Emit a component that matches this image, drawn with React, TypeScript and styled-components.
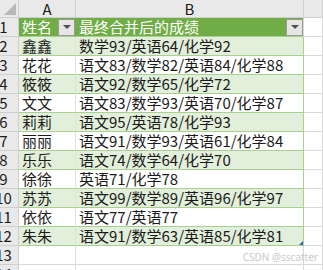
import React from 'react';
import styled, { createGlobalStyle } from 'styled-components';

const GlobalStyle = createGlobalStyle`
  html, body {
    margin: 0;
    padding: 0;
    background: #ffffff;
    overflow: hidden;
  }
  body {
    font-family: "Noto Sans CJK SC", "Noto Sans", sans-serif;
  }
`;

const colors = {
  headerBg: '#e9e9e9',
  headerLine: '#cfcfcf',
  grid: '#d9d9d9',
  tableHead: '#70ad47',
  band: '#e2efda',
  tableLine: '#a9d08e',
  text: '#1a1a1a',
};

// the sheet is scrolled a little to the right, so the row numbers are cut at the edge
const Sheet = styled.div`
  position: relative;
  display: grid;
  grid-template-columns: 30px 57px 228px 1fr;
  grid-template-rows: 18px;
  grid-auto-rows: 19px;
  margin-left: -11px;
  width: calc(100vw + 11px);
  height: 270px;
  overflow: hidden;
  font-size: 15px;
  color: ${colors.text};
`;

const Corner = styled.div`
  display: flex;
  align-items: flex-end;
  justify-content: flex-end;
  padding: 0 2px 2px 0;
  box-sizing: border-box;
  background: ${colors.headerBg};
  border-right: 1px solid ${colors.headerLine};
  border-bottom: 1px solid ${colors.headerLine};
`;

const CornerMark = styled.div`
  width: 0;
  height: 0;
  border-left: 12px solid transparent;
  border-bottom: 12px solid #b8b8b8;
`;

const ColHead = styled.div`
  display: flex;
  align-items: center;
  justify-content: center;
  box-sizing: border-box;
  background: ${colors.headerBg};
  border-right: 1px solid ${colors.headerLine};
  border-bottom: 1px solid ${colors.headerLine};
  line-height: 16px;
`;

const RowHead = styled.div`
  display: flex;
  align-items: center;
  justify-content: center;
  box-sizing: border-box;
  background: ${colors.headerBg};
  border-right: 1px solid ${colors.headerLine};
  border-bottom: 1px solid ${colors.headerLine};
  line-height: 18px;
`;

type Kind = 'head' | 'band' | 'plain' | 'empty';

const cellBg: Record<Kind, string> = {
  head: colors.tableHead,
  band: colors.band,
  plain: '#ffffff',
  empty: '#ffffff',
};

const Cell = styled.div<{ $kind: Kind; $last?: boolean }>`
  position: relative;
  display: flex;
  align-items: center;
  justify-content: space-between;
  box-sizing: border-box;
  padding-left: 3px;
  white-space: nowrap;
  overflow: hidden;
  line-height: 18px;
  background: ${(p) => cellBg[p.$kind]};
  color: ${(p) => (p.$kind === 'head' ? '#ffffff' : colors.text)};
  border-bottom: 1px solid
    ${(p) => (p.$kind === 'empty' ? colors.grid : colors.tableLine)};
  border-right: 1px solid
    ${(p) => {
      if (p.$kind === 'empty') return colors.grid;
      if (p.$last) return p.$kind === 'head' ? colors.grid : colors.tableLine;
      return p.$kind === 'head' ? colors.tableHead : '#dde6d6';
    }};
`;

const FilterButton = styled.div`
  display: flex;
  align-items: center;
  justify-content: center;
  flex: none;
  width: 17px;
  height: 17px;
  box-sizing: border-box;
  background: #e6e6e6;
  border: 1px solid #9a9a9a;
`;

const FilterArrow = styled.div`
  width: 0;
  height: 0;
  border-left: 4px solid transparent;
  border-right: 4px solid transparent;
  border-top: 4px solid #505050;
`;

const FillHandle = styled.div`
  position: absolute;
  right: 0;
  bottom: 0;
  width: 0;
  height: 0;
  border-left: 4px solid transparent;
  border-bottom: 4px solid #3f5bbf;
`;

const Watermark = styled.div`
  position: absolute;
  right: 5px;
  bottom: 7px;
  font-family: "Noto Sans", "Liberation Sans", sans-serif;
  font-size: 10px;
  line-height: 12px;
  color: #c9c9c9;
`;

const rows: [string, string][] = [
  ['鑫鑫', '数学93/英语64/化学92'],
  ['花花', '语文83/数学82/英语84/化学88'],
  ['筱筱', '语文92/数学65/化学72'],
  ['文文', '语文83/数学93/英语70/化学87'],
  ['莉莉', '语文95/英语78/化学93'],
  ['丽丽', '语文91/数学93/英语61/化学84'],
  ['乐乐', '语文74/数学64/化学70'],
  ['徐徐', '英语71/化学78'],
  ['苏苏', '语文99/数学89/英语96/化学97'],
  ['依依', '语文77/英语77'],
  ['朱朱', '语文91/数学63/英语85/化学81'],
];

const Filter = () => (
  <FilterButton>
    <FilterArrow />
  </FilterButton>
);

export default function App() {
  return (
    <>
      <GlobalStyle />
      <Sheet>
        <Corner>
          <CornerMark />
        </Corner>
        <ColHead>A</ColHead>
        <ColHead>B</ColHead>
        <ColHead />

        <RowHead>1</RowHead>
        <Cell $kind="head">
          <span>姓名</span>
          <Filter />
        </Cell>
        <Cell $kind="head" $last>
          <span>最终合并后的成绩</span>
          <Filter />
        </Cell>
        <Cell $kind="empty" />

        {rows.map(([name, score], i) => {
          const kind: Kind = i % 2 === 0 ? 'band' : 'plain';
          const isLast = i === rows.length - 1;
          return (
            <React.Fragment key={name}>
              <RowHead>{i + 2}</RowHead>
              <Cell $kind={kind}>{name}</Cell>
              <Cell $kind={kind} $last>
                {score}
                {isLast && <FillHandle />}
              </Cell>
              <Cell $kind="empty" />
            </React.Fragment>
          );
        })}

        {[13, 14].map((n) => (
          <React.Fragment key={n}>
            <RowHead>{n}</RowHead>
            <Cell $kind="empty" />
            <Cell $kind="empty" />
            <Cell $kind="empty" />
          </React.Fragment>
        ))}
        <Watermark>CSDN @sscatter</Watermark>
      </Sheet>
    </>
  );
}
